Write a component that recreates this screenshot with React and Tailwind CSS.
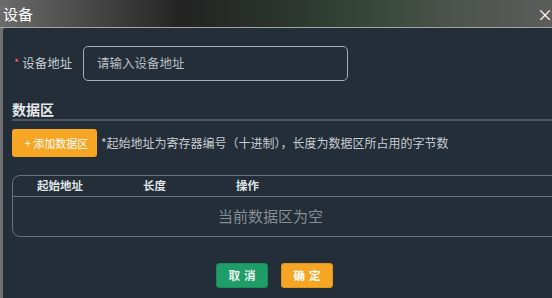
import React from "react";

export default function App() {
  const font = { fontFamily: '"Noto Sans CJK SC", "Noto Sans", sans-serif' };
  return (
    <div
      className="w-[552px] h-[298px] overflow-hidden flex flex-col bg-[#777777]"
      style={font}
    >
      <div className="h-[27px] shrink-0 flex items-center justify-between bg-[linear-gradient(90deg,#6b6b6b_0%,#4a4a4a_15%,#232323_33%,#2a332c_50%,#34473a_66%,#4c534c_82%,#5b5d5a_100%)]">
        <span className="pl-[3px] text-[15px] leading-none text-white">设备</span>
        <span className="-mr-[1px] text-[16px] leading-none text-white">×</span>
      </div>
      <div className="h-px shrink-0 bg-[#a3a5a3]" />
      <div className="flex-1 pl-[3px] bg-[#6f7072]">
        <div className="h-full w-[600px] bg-[#232e38] rounded-tl-[3px] pt-[18px] pl-[9px] flex flex-col">
          {/* form row */}
          <div className="flex items-center h-[35px]">
            <div className="w-[71px] pl-[2px] flex items-center text-[12.5px] text-[#c9cdd2]">
              <span className="text-[#f56c6c] text-[11px] mr-[3px] -mt-[3px]">*</span>
              <span>设备地址</span>
            </div>
            <div className="w-[265px] h-[35px] border-[1.5px] border-[#a7adb3] rounded-[5px] flex items-center pl-[13px] text-[12.5px] text-[#b9bec3]">
              请输入设备地址
            </div>
          </div>

          {/* heading */}
          <div className="mt-[19px] border-b-2 border-[#4e555c] pb-[1px] text-[14px] leading-[18px] font-bold text-[#e6e8ea]">
            数据区
          </div>

          {/* add button + note */}
          <div className="mt-[8px] flex items-center">
            <div className="w-[85px] h-[28px] bg-[#f6a623] rounded-[3px] flex items-center justify-center pl-[4px] text-[11px] text-white">
              + 添加数据区
            </div>
            <span className="ml-[4px] text-[12px] text-[#c8ccd0]">
              *起始地址为寄存器编号（十进制），长度为数据区所占用的字节数
            </span>
          </div>

          {/* table */}
          <div className="mt-[18px] w-[580px] h-[62px] border border-[#6a7178] rounded-[8px] flex flex-col">
            <div className="h-[21px] border-b border-[#6a7178] flex items-center text-[11.5px] font-bold text-[#dfe3e7]">
              <span className="ml-[24px] w-[106px]">起始地址</span>
              <span className="w-[93px]">长度</span>
              <span>操作</span>
            </div>
            <div className="flex-1 flex items-center">
              <div className="w-[515px] text-center text-[15px] text-[#868d94]">当前数据区为空</div>
            </div>
          </div>

          {/* footer */}
          <div className="mt-[26px] flex pl-[204px] gap-[13px]">
            <div className="w-[52px] h-[25px] rounded-[3px] bg-[#1f9d68] border border-[#1a8a5b] flex items-center justify-center text-[11.5px] font-bold tracking-[4px] pl-[4px] text-[#eef7f2]">
              取消
            </div>
            <div className="w-[52px] h-[25px] rounded-[3px] bg-[#f6a623] border border-[#e0951c] flex items-center justify-center text-[11.5px] font-bold tracking-[4px] pl-[4px] text-white">
              确定
            </div>
          </div>
        </div>
      </div>
    </div>
  );
}
